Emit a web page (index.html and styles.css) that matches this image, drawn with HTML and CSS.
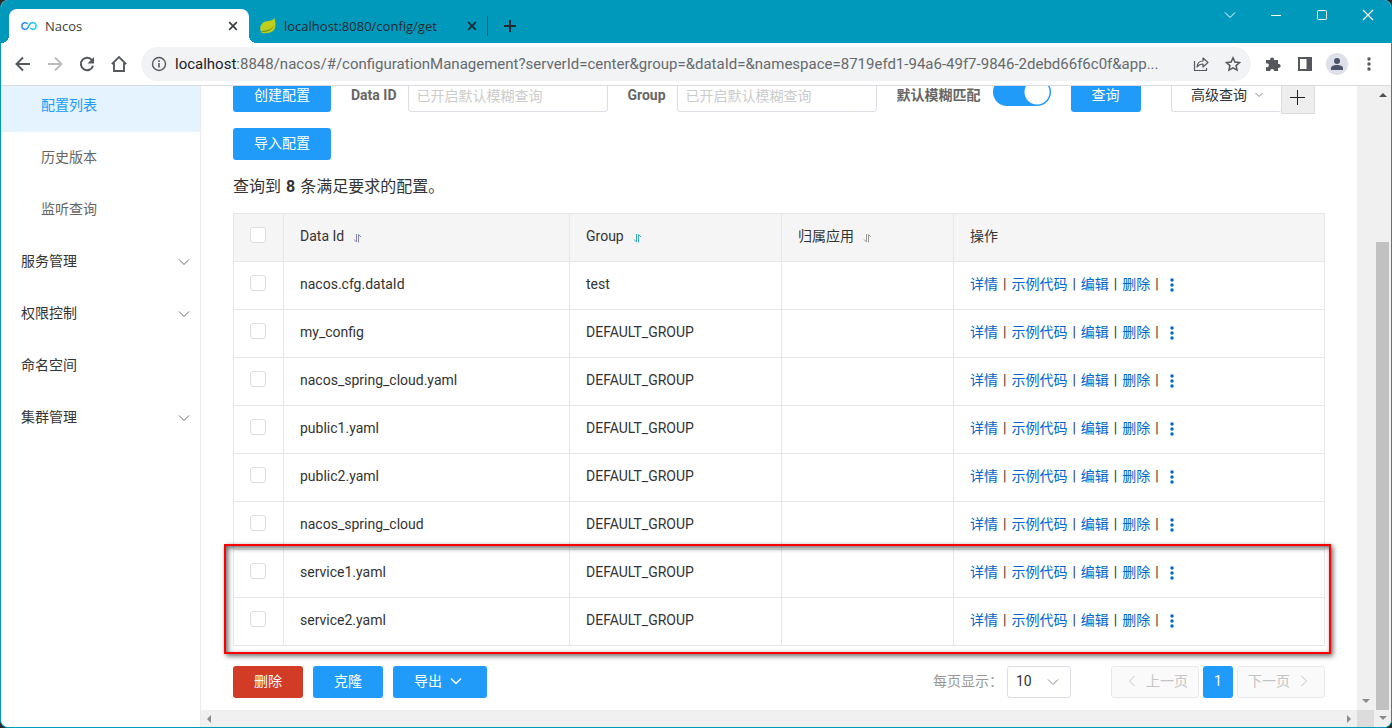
FILE: index.html
```html
<!DOCTYPE html>
<html lang="zh-CN">
<head>
<meta charset="utf-8">
<title>Nacos</title>
<link rel="stylesheet" href="styles.css">
</head>
<body>
<svg class="defs" width="0" height="0" aria-hidden="true">
  <symbol id="chev" viewBox="0 0 12 12"><path d="M1 3.5l5 5 5-5" fill="none" stroke="currentColor"/></symbol>
  <symbol id="close" viewBox="0 0 10 10"><path d="M1.2 1.2l7.6 7.6M8.8 1.2L1.2 8.8" fill="none" stroke="currentColor" stroke-width="1.7"/></symbol>
  <symbol id="sort" viewBox="0 0 10 10"><path d="M1 6.5l2.500 2.500V1M5.500 9.500V1.500l2.500 2.500" fill="none" stroke="currentColor"/></symbol>
  <symbol id="more" viewBox="0 0 4 14"><g fill="currentColor"><circle cx="2" cy="2" r="1.700"/><circle cx="2" cy="7" r="1.700"/><circle cx="2" cy="12" r="1.700"/></g></symbol>
</svg>
<div class="window">
  <header class="tabs">
    <div class="tab active">
      <svg width="16" height="10" viewBox="0 0 17 10"><defs><linearGradient id="g"><stop offset="0" stop-color="#3b82f6"/><stop offset="1" stop-color="#1fd8f5"/></linearGradient></defs><path d="M7.200 3C5.500.8 1 .6 1 5s4.500 4.200 6 2.200l2.500-4.400C11.500.8 16 .6 16 5s-4.500 4.200-6.200 2" fill="none" stroke="url(#g)" stroke-width="1.700"/></svg>
      <span class="tab-title">Nacos</span>
      <button class="plain" aria-label="关闭"><svg width="10" height="10"><use href="#close"/></svg></button>
    </div>
    <div class="tab">
      <svg width="16" height="16" viewBox="0 0 16 16"><path d="M14.500 0c1 4 2 10-1.500 13-3 2.500-8 2.200-11 2C-1 12 0 6 4 4c4-1.500 8-.5 10.500-4z" fill="#bdcf1c"/><path d="M1 14c5 .5 11-1 13.500-7-3 4.500-7 5.500-12.500 6z" fill="#6b9a1e"/></svg>
      <span class="tab-title">localhost:8080/config/get</span>
      <button class="plain" aria-label="关闭"><svg width="10" height="10"><use href="#close"/></svg></button>
    </div>
    <button class="plain newtab" aria-label="新标签页"><svg width="12" height="12" viewBox="0 0 12 12"><path d="M6 0v12M0 6h12" stroke="currentColor" stroke-width="2"/></svg></button>
    <div class="wincontrols">
      <button class="plain" aria-label="搜索标签页"><svg width="12" height="12"><use href="#chev"/></svg></button>
      <button class="plain" aria-label="最小化"><svg width="12" height="12" viewBox="0 0 12 12"><path d="M1 6.500h10" stroke="currentColor"/></svg></button>
      <button class="plain" aria-label="最大化"><svg width="12" height="12" viewBox="0 0 12 12"><rect x="1.500" y="1.500" width="9" height="9" rx="1" fill="none" stroke="currentColor"/></svg></button>
      <button class="plain" aria-label="关闭窗口"><svg width="12" height="12" viewBox="0 0 12 12"><path d="M1 1l10 10M11 1L1 11" stroke="currentColor" stroke-width="1.200"/></svg></button>
    </div>
  </header>
  <nav class="toolbar">
    <button class="plain" aria-label="后退"><svg width="16" height="16" viewBox="0 0 16 16"><path d="M15 8H2M8 1.500L1.500 8 8 14.500" fill="none" stroke="currentColor" stroke-width="1.900"/></svg></button>
    <button class="plain faded" aria-label="前进"><svg width="16" height="16" viewBox="0 0 16 16"><path d="M1 8h13M8 1.500L14.500 8 8 14.500" fill="none" stroke="currentColor" stroke-width="1.900"/></svg></button>
    <button class="plain" aria-label="刷新"><svg width="16" height="16" viewBox="0 0 16 16"><path d="M13 4.200A6.200 6.200 0 1 0 14 9.800" fill="none" stroke="currentColor" stroke-width="2"/><path d="M15 1v6.500H8.500z" fill="currentColor"/></svg></button>
    <button class="plain" aria-label="主页"><svg width="18" height="18" viewBox="0 0 18 18"><path d="M1.800 9.200L9 2l7.200 7.200M4 8v8h10V8" fill="none" stroke="currentColor" stroke-width="1.900"/></svg></button>
    <div class="address">
      <svg width="16" height="16" viewBox="0 0 16 16"><circle cx="8" cy="8" r="6.500" fill="none" stroke="currentColor" stroke-width="1.400"/><path d="M8 7v4.500M8 4.300V6" stroke="currentColor" stroke-width="1.600"/></svg>
      <div class="url"><b>localhost</b>:8848/nacos/#/configurationManagement?serverId=center&amp;group=&amp;dataId=&amp;namespace=8719efd1-94a6-49f7-9846-2debd66f6c0f&amp;app...</div>
      <button class="plain" aria-label="分享"><svg width="16" height="16" viewBox="0 0 16 16"><path d="M1.500 5v9.500h12V12" fill="none" stroke="currentColor" stroke-width="1.200"/><path d="M4 11c.3-4 2.500-6 6-6V2l5 4.500-5 4.500V8C7.500 8 5.500 9 4 11z" fill="none" stroke="currentColor" stroke-width="1.200" stroke-linejoin="round"/></svg></button>
      <button class="plain" aria-label="收藏"><svg width="16" height="16" viewBox="0 0 16 16"><path d="M8 1.800l1.900 4.200 4.600.5-3.400 3.100.9 4.500L8 11.800l-4 2.300.9-4.500L1.500 6.500 6.100 6z" fill="none" stroke="currentColor" stroke-width="1.500"/></svg></button>
    </div>
    <div class="actions">
      <button class="plain" aria-label="扩展程序"><svg width="16" height="16" viewBox="0 0 16 16"><path d="M1 4h4.200a2 2 0 1 1 3.800 0h4v4a2 2 0 1 1 0 3.800V15H9.200a2 2 0 1 0-4 0H1v-4a2 2 0 1 0 0-3.600z" fill="currentColor"/></svg></button>
      <button class="plain" aria-label="侧边栏"><svg width="16" height="16" viewBox="0 0 16 16"><path d="M2 2h12v12H2z" fill="none" stroke="currentColor" stroke-width="2"/><path d="M9.500 2H14v12H9.500z" fill="currentColor"/></svg></button>
      <button class="plain avatar" aria-label="个人资料"><svg width="12" height="12" viewBox="0 0 12 12" fill="#4b5468"><circle cx="6" cy="3" r="3"/><path d="M0 12V10c0-2 3-3 6-3s6 1 6 3v2z"/></svg></button>
      <button class="plain" aria-label="菜单"><svg width="4" height="14"><use href="#more"/></svg></button>
    </div>
  </nav>
  <div class="page">
    <aside class="sidebar">
      <ul>
        <li class="sub current"><a href="#">配置列表</a></li>
        <li class="sub"><a href="#">历史版本</a></li>
        <li class="sub"><a href="#">监听查询</a></li>
        <li><a href="#">服务管理<svg width="12" height="12"><use href="#chev"/></svg></a></li>
        <li><a href="#">权限控制<svg width="12" height="12"><use href="#chev"/></svg></a></li>
        <li><a href="#">命名空间</a></li>
        <li><a href="#">集群管理<svg width="12" height="12"><use href="#chev"/></svg></a></li>
      </ul>
    </aside>
    <main class="main">
      <div class="content">
        <form class="filters">
          <button type="button" class="btn primary">创建配置</button>
          <div class="field"><label for="dataid">Data ID</label><input id="dataid" type="text" placeholder="已开启默认模糊查询"></div>
          <div class="field"><label for="group">Group</label><input id="group" type="text" placeholder="已开启默认模糊查询"></div>
          <div class="field wide"><label for="fuzzy">默认模糊匹配</label><input id="fuzzy" class="switch" type="checkbox" checked></div>
          <button type="button" class="btn primary">查询</button>
          <div class="advanced">
            <button type="button" class="btn outline">高级查询<svg width="8" height="8" viewBox="0 0 8 8"><path d="M.5 2L4 5.500 7.500 2" fill="none" stroke="currentColor"/></svg></button>
            <button type="button" class="plus" aria-label="新建"><svg width="15" height="15" viewBox="0 0 15 15"><path d="M7.500 0v15M0 7.500h15" stroke="currentColor"/></svg></button>
          </div>
        </form>
        <button type="button" class="btn primary">导入配置</button>
        <p class="summary">查询到 <b>8</b> 条满足要求的配置。</p>
        <div class="tablewrap">
          <table>
            <colgroup><col class="c-check"><col class="c-id"><col class="c-group"><col class="c-app"><col></colgroup>
            <thead><tr>
              <th><input type="checkbox" aria-label="全选"></th>
              <th>Data Id<svg class="sort violet" width="10" height="10"><use href="#sort"/></svg></th>
              <th>Group<svg class="sort teal" width="10" height="10"><use href="#sort"/></svg></th>
              <th>归属应用<svg class="sort" width="10" height="10"><use href="#sort"/></svg></th>
              <th>操作</th>
            </tr></thead>
            <tbody>
              <tr><td><input type="checkbox" aria-label="nacos.cfg.dataId"></td><td>nacos.cfg.dataId</td><td>test</td><td></td><td class="ops"><a href="#">详情</a><i>|</i><a href="#">示例代码</a><i>|</i><a href="#">编辑</a><i>|</i><a href="#">删除</a><i>|</i><a href="#" aria-label="更多"><svg width="4" height="14"><use href="#more"/></svg></a></td></tr>
              <tr><td><input type="checkbox" aria-label="my_config"></td><td>my_config</td><td>DEFAULT_GROUP</td><td></td><td class="ops"><a href="#">详情</a><i>|</i><a href="#">示例代码</a><i>|</i><a href="#">编辑</a><i>|</i><a href="#">删除</a><i>|</i><a href="#" aria-label="更多"><svg width="4" height="14"><use href="#more"/></svg></a></td></tr>
              <tr><td><input type="checkbox" aria-label="nacos_spring_cloud.yaml"></td><td>nacos_spring_cloud.yaml</td><td>DEFAULT_GROUP</td><td></td><td class="ops"><a href="#">详情</a><i>|</i><a href="#">示例代码</a><i>|</i><a href="#">编辑</a><i>|</i><a href="#">删除</a><i>|</i><a href="#" aria-label="更多"><svg width="4" height="14"><use href="#more"/></svg></a></td></tr>
              <tr><td><input type="checkbox" aria-label="public1.yaml"></td><td>public1.yaml</td><td>DEFAULT_GROUP</td><td></td><td class="ops"><a href="#">详情</a><i>|</i><a href="#">示例代码</a><i>|</i><a href="#">编辑</a><i>|</i><a href="#">删除</a><i>|</i><a href="#" aria-label="更多"><svg width="4" height="14"><use href="#more"/></svg></a></td></tr>
              <tr><td><input type="checkbox" aria-label="public2.yaml"></td><td>public2.yaml</td><td>DEFAULT_GROUP</td><td></td><td class="ops"><a href="#">详情</a><i>|</i><a href="#">示例代码</a><i>|</i><a href="#">编辑</a><i>|</i><a href="#">删除</a><i>|</i><a href="#" aria-label="更多"><svg width="4" height="14"><use href="#more"/></svg></a></td></tr>
              <tr><td><input type="checkbox" aria-label="nacos_spring_cloud"></td><td>nacos_spring_cloud</td><td>DEFAULT_GROUP</td><td></td><td class="ops"><a href="#">详情</a><i>|</i><a href="#">示例代码</a><i>|</i><a href="#">编辑</a><i>|</i><a href="#">删除</a><i>|</i><a href="#" aria-label="更多"><svg width="4" height="14"><use href="#more"/></svg></a></td></tr>
              <tr><td><input type="checkbox" aria-label="service1.yaml"></td><td>service1.yaml</td><td>DEFAULT_GROUP</td><td></td><td class="ops"><a href="#">详情</a><i>|</i><a href="#">示例代码</a><i>|</i><a href="#">编辑</a><i>|</i><a href="#">删除</a><i>|</i><a href="#" aria-label="更多"><svg width="4" height="14"><use href="#more"/></svg></a></td></tr>
              <tr><td><input type="checkbox" aria-label="service2.yaml"></td><td>service2.yaml</td><td>DEFAULT_GROUP</td><td></td><td class="ops"><a href="#">详情</a><i>|</i><a href="#">示例代码</a><i>|</i><a href="#">编辑</a><i>|</i><a href="#">删除</a><i>|</i><a href="#" aria-label="更多"><svg width="4" height="14"><use href="#more"/></svg></a></td></tr>
            </tbody>
          </table>
          <div class="marker"></div>
        </div>
        <div class="footer">
          <button type="button" class="btn danger">删除</button>
          <button type="button" class="btn primary">克隆</button>
          <button type="button" class="btn primary export">导出<svg width="12" height="12" viewBox="0 0 12 12"><path d="M1 3.500l5 5 5-5" fill="none" stroke="currentColor" stroke-width="1.400"/></svg></button>
          <div class="paging">
            <label for="size">每页显示：</label>
            <div class="select"><select id="size"><option>10</option></select><svg width="12" height="12"><use href="#chev"/></svg></div>
            <div class="pages">
              <button type="button" class="btn disabled prev" disabled><svg class="left" width="12" height="12"><use href="#chev"/></svg>上一页</button>
              <button type="button" class="btn primary num">1</button>
              <button type="button" class="btn disabled next" disabled>下一页<svg class="right" width="12" height="12"><use href="#chev"/></svg></button>
            </div>
          </div>
        </div>
      </div>
      <div class="hbar"><span class="arrow west"></span><span class="arrow east"></span></div>
    </main>
    <div class="vbar inner"><span class="arrow south"></span><div class="corner"></div></div>
    <div class="vbar outer"><span class="arrow north"></span><div class="thumb"></div><span class="arrow south"></span></div>
  </div>
</div>
</body>
</html>
```
FILE: styles.css
```css
* { box-sizing: border-box; }
body {
  margin: 0;
  background: #2b2b2b;
  color: #333;
  font: 14px/20px Roboto, "Noto Sans CJK SC", sans-serif;
}
.defs { position: absolute; }
svg { display: block; flex: none; }
button, input, select { font: inherit; color: inherit; }
a { color: inherit; text-decoration: none; }
.plain {
  display: flex;
  align-items: center;
  justify-content: center;
  padding: 0;
  border: 0;
  background: none;
}
.window {
  display: flex;
  flex-direction: column;
  height: 100vh;
  overflow: hidden;
  border: solid #0099bc;
  border-width: 0 1px 1px;
  border-radius: 8px;
  background: #fff;
}

/* Tab strip */
.tabs {
  display: flex;
  align-items: flex-end;
  flex: none;
  height: 43px;
  padding-left: 8px;
  background: #0099bc;
  color: #1f2a30;
  font: 13px/18px "Open Sans", "Noto Sans", sans-serif;
}
.tab {
  position: relative;
  display: flex;
  align-items: center;
  gap: 8px;
  width: 238px;
  height: 34px;
  padding: 0 10px 0 11px;
}
.tab.active {
  width: 240px;
  padding: 0 11px 0 12px;
  border-radius: 8px 8px 0 0;
  background: #fff;
  color: #3c4043;
}
.tab.active::before, .tab.active::after {
  content: "";
  position: absolute;
  bottom: 0;
  width: 8px;
  height: 8px;
}
.tab.active::before { left: -8px; background: radial-gradient(circle at 0 0, transparent 8px, #fff 8px); }
.tab.active::after { right: -8px; background: radial-gradient(circle at 100% 0, transparent 8px, #fff 8px); }
.tab-title { flex: 1; white-space: nowrap; }
.newtab {
  width: 44px;
  height: 20px;
  margin-bottom: 7px;
  border-left: 1px solid #1b5566;
}
.wincontrols {
  display: flex;
  align-self: flex-start;
  margin-left: auto;
  color: #fff;
}
.wincontrols .plain { width: 46px; height: 30px; }

/* Toolbar */
.toolbar {
  display: flex;
  align-items: center;
  flex: none;
  height: 43px;
  padding-left: 6px;
  border-bottom: 1px solid #d9dbde;
  color: #54585d;
}
.toolbar > .plain { width: 32px; }
.faded { color: #babcbe; }
.address {
  display: flex;
  align-items: center;
  flex: 1;
  min-width: 0;
  height: 34px;
  margin-left: 6px;
  padding: 0 10px;
  border-radius: 17px;
  background: #f1f3f4;
}
.url {
  flex: 1;
  min-width: 0;
  margin-left: 8px;
  color: #666a6e;
  font-size: 15px;
  white-space: nowrap;
}
.url b { color: #202124; font-weight: 400; }
.address .plain { margin-left: 16px; }
.address .plain:first-of-type { margin-left: 8px; }
.actions { display: flex; width: 140px; padding-left: 6px; }
.actions .plain { width: 32px; height: 22px; }
.actions .plain.avatar { width: 22px; margin: 0 5px; border-radius: 50%; background: #dde0e8; }

/* Page */
.page { display: flex; flex: 1; min-height: 0; }
.sidebar {
  width: 200px;
  overflow: hidden;
  border-right: 1px solid #ebebeb;
}
.sidebar ul { margin: -6px 0 0; padding: 0; list-style: none; }
.sidebar a {
  display: flex;
  align-items: center;
  justify-content: space-between;
  height: 52px;
  padding: 0 10px 2px 20px;
}
.sidebar svg { margin-top: 2px; color: #666; }
.sidebar .sub a { padding-left: 40px; color: #666; }
.sidebar .current a { background: #e4f3fe; color: #209bfa; }
.main {
  display: flex;
  flex-direction: column;
  flex: 1;
  min-width: 0;
  overflow: hidden;
}
.content { flex: 1; min-height: 0; margin-top: -6px; padding: 0 32px; }
.filters { display: flex; gap: 20px; margin-bottom: 14px; }
.btn {
  display: inline-flex;
  align-items: center;
  justify-content: center;
  gap: 8px;
  height: 32px;
  padding: 0 20px 2px;
  border: 1px solid transparent;
  border-radius: 3px;
  white-space: nowrap;
}
.primary { background: #209bfa; color: #fff; }
.danger { background: #d23c26; color: #fff; }
.btn.primary:not(.num), .btn.danger { min-width: 70px; }
.field { display: flex; gap: 11px; height: 32px; }
.field.wide { gap: 12px; }
.field label { color: #666; font-weight: 700; line-height: 30px; white-space: nowrap; }
.field input[type="text"] {
  width: 200px;
  height: 32px;
  padding: 0 8px;
  border: 1px solid #dcdee3;
  border-radius: 3px;
}
.field input::placeholder { color: #ccc; opacity: 1; }
.switch {
  appearance: none;
  width: 58px;
  height: 28px;
  margin: -2px 0 0;
  border-radius: 14px;
  background: radial-gradient(circle at 44px 14px, #fff 12px, #209bfa 13px);
}
.advanced { display: flex; margin-left: 10px; }
.outline {
  width: 110px;
  padding: 0 14px 2px 16px;
  border-color: #dcdee3;
  border-right: 0;
  background: #fff;
}
.outline svg { color: #888; }
.plus {
  display: grid;
  place-items: center;
  width: 34px;
  height: 34px;
  padding: 0;
  border: 1px solid #dcdcdc;
  background: #eee;
  color: #222;
}
.summary { margin: 16px 0; font-size: 16px; line-height: 21px; }
.summary b { margin: 0 1px; }

/* Table */
.tablewrap { position: relative; }
table {
  width: 100%;
  border-collapse: collapse;
  table-layout: fixed;
}
.c-check { width: 50px; }
.c-id { width: 286px; }
.c-group { width: 212px; }
.c-app { width: 172px; }
th, td {
  height: 48px;
  padding: 0 16px 4px;
  border: 1px solid #e5e6e8;
  font-weight: 400;
  text-align: left;
}
th { background: #f5f5f5; }
table input {
  display: block;
  appearance: none;
  width: 16px;
  height: 16px;
  margin: 0 0 2px;
  border: 1px solid #dcdee3;
  border-radius: 3px;
  background: #fff;
}
.sort { display: inline-block; margin-left: 9px; vertical-align: -2px; color: #999; }
.violet { color: #8585b5; }
.teal { color: #39a9bf; }
.ops a { color: #0066cc; }
.ops i { margin: 0 5px; font-style: normal; }
.ops svg { display: inline-block; margin-left: 6px; vertical-align: -3px; }
.marker {
  position: absolute;
  top: 331px;
  right: -6px;
  bottom: -8px;
  left: -9px;
  border: 2px solid #f00;
  box-shadow: 2px 2px 5px rgba(0, 0, 0, .6), inset 2px 2px 5px rgba(0, 0, 0, .6);
  pointer-events: none;
}

/* Table footer */
.footer { display: flex; gap: 10px; margin-top: 20px; }
.export { padding-right: 24px; }
.paging { display: flex; margin-left: auto; }
.paging label { padding-right: 4px; color: #999; line-height: 30px; }
.select { position: relative; }
.select select {
  appearance: none;
  width: 64px;
  height: 32px;
  padding: 0 8px 2px;
  border: 1px solid #dcdee3;
  border-radius: 3px;
  background: #fff;
}
.select svg { position: absolute; top: 10px; right: 12px; color: #888; pointer-events: none; }
.pages { display: flex; gap: 4px; margin-left: 40px; }
.num { width: 30px; padding: 0 0 2px; }
.disabled { width: 88px; border-color: #e9e9e9; background: #fafafa; color: #c4c4c4; }
.prev { padding: 0 9px 2px 13px; }
.next { padding: 0 13px 2px 9px; }
.left { transform: rotate(90deg); }
.right { transform: rotate(-90deg); }

/* Scroll bars */
.hbar {
  display: flex;
  align-items: center;
  justify-content: space-between;
  flex: none;
  height: 17px;
  padding: 0 6px;
  background: #f0f0f0;
}
.vbar {
  display: flex;
  flex-direction: column;
  align-items: center;
  justify-content: flex-end;
  flex: none;
  width: 17px;
  background: #f0f0f0;
}
.outer { padding: 7px 0; }
.inner .south { margin-bottom: 7px; }
.corner { width: 17px; height: 17px; background: #dcdcdc; }
.thumb { flex: 1; width: 13px; margin: 145px 0 6px; background: #c1c1c1; }
.arrow { border: 4px solid transparent; }
.north { border-top: 0; border-bottom-color: #505050; }
.south { border-bottom: 0; border-top-color: #8b8b8b; }
.west { border-left: 0; border-right-color: #8b8b8b; }
.east { border-right: 0; border-left-color: #8b8b8b; }
```
